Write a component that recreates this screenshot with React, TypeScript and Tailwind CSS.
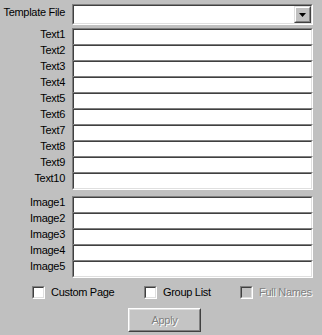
const textFields = ['Text1', 'Text2', 'Text3', 'Text4', 'Text5', 'Text6', 'Text7', 'Text8', 'Text9', 'Text10'];
const imageFields = ['Image1', 'Image2', 'Image3', 'Image4', 'Image5'];

function EditRow({ label, last }: { label: string; last: boolean }) {
  return (
    <div className="flex">
      <div className="w-[72px] pr-[7px] text-right leading-[13px]">{label}</div>
      <div
        className={`w-[241px] border-t border-l border-r border-[#808080] border-r-white ${
          last ? 'h-[18px] border-b border-b-white' : 'h-[16px]'
        }`}
      >
        <div
          className={`h-full bg-white border-t border-l border-r border-[#404040] border-r-[#dfdfdf] ${
            last ? 'border-b border-b-[#dfdfdf]' : ''
          }`}
        />
      </div>
    </div>
  );
}

function Checkbox({ label, disabled, width }: { label: string; disabled?: boolean; width: string }) {
  return (
    <div className={`flex items-start gap-[6px] ${width}`}>
      <div className="w-[13px] h-[13px] border-t border-l border-[#808080] border-r border-b border-r-white border-b-white">
        <div
          className={`h-full border-t border-l border-[#404040] border-r border-b border-r-[#dfdfdf] border-b-[#dfdfdf] ${
            disabled ? 'bg-[#c0c0c0]' : 'bg-white'
          }`}
        />
      </div>
      <span
        className={`leading-[13px] ${disabled ? 'text-[#808080] [text-shadow:1px_1px_0_#ffffff]' : 'text-black'}`}
      >
        {label}
      </span>
    </div>
  );
}

export default function App() {
  return (
    <div className="w-[322px] h-[335px] bg-[#c0c0c0] text-black text-[11px] tracking-[-0.3px] font-['Liberation_Sans',Arial,sans-serif] flex flex-col pt-[4px] overflow-hidden">
      {/* Template file combo */}
      <div className="flex">
        <div className="w-[72px] pr-[7px] text-right leading-[16px]">Template File</div>
        <div className="w-[241px] h-[21px] border border-[#808080] border-r-white border-b-white">
          <div className="h-full flex justify-end bg-white border border-[#404040] border-r-[#dfdfdf] border-b-[#dfdfdf]">
            <div className="w-[17px] h-full border border-[#dfdfdf] border-r-[#404040] border-b-[#404040]">
              <div className="h-full flex items-center justify-center bg-[#c0c0c0] border border-white border-r-[#808080] border-b-[#808080]">
                <svg width="7" height="4" viewBox="0 0 7 4" className="mt-[1px]">
                  <path d="M0 0h7L3.5 4z" fill="#000" />
                </svg>
              </div>
            </div>
          </div>
        </div>
      </div>

      {/* Text fields */}
      <div className="flex flex-col mt-[3px]">
        {textFields.map((t, i) => (
          <EditRow key={t} label={t} last={i === textFields.length - 1} />
        ))}
      </div>

      {/* Image fields */}
      <div className="flex flex-col mt-[6px]">
        {imageFields.map((t, i) => (
          <EditRow key={t} label={t} last={i === imageFields.length - 1} />
        ))}
      </div>

      {/* Options */}
      <div className="flex pl-[32px] mt-[8px]">
        <Checkbox label="Custom Page" width="w-[112px]" />
        <Checkbox label="Group List" width="w-[96px]" />
        <Checkbox label="Full Names" disabled width="w-[80px]" />
      </div>

      {/* Apply */}
      <div className="flex pl-[128px] mt-[9px]">
        <div className="w-[73px] h-[24px] border border-white border-r-[#404040] border-b-[#404040]">
          <div className="h-full flex items-center justify-center bg-[#c4c4c4] border border-[#dfdfdf] border-r-[#808080] border-b-[#808080] text-[#808080] [text-shadow:1px_1px_0_#ffffff]">
            Apply
          </div>
        </div>
      </div>
    </div>
  );
}
